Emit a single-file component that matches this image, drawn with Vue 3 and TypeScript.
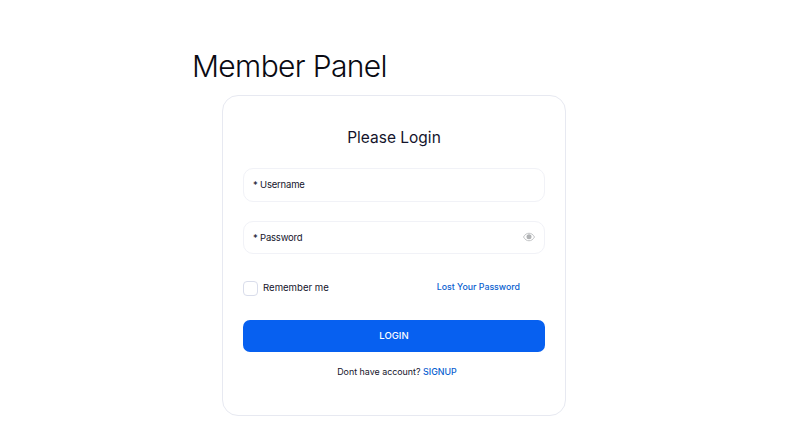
<script setup lang="ts">
const heading: string = 'Member Panel'
</script>

<template>
  <main class="page">
    <section class="panel">
      <h1 class="heading">{{ heading }}</h1>
      <form class="card" @submit.prevent>
        <h2 class="card-title">Please Login</h2>
        <div class="field field-user"><span>* Username</span></div>
        <div class="field field-pass">
          <span>* Password</span>
          <svg class="eye" viewBox="0 0 24 24" width="12" height="12" aria-hidden="true">
            <path d="M1 12C4 6.500 8 4.500 12 4.500S20 6.500 23 12c-3 5.500-7 7.500-11 7.500S4 17.500 1 12Z" fill="none" stroke="#c2c4c6" stroke-width="2" />
            <circle cx="12" cy="11.500" r="5" fill="#b0b2b4" />
          </svg>
        </div>
        <div class="options">
          <label class="remember"><span class="box"></span><span class="remember-text">Remember me</span></label>
          <a class="lost" href="#">Lost Your Password</a>
        </div>
        <button class="login" type="submit">LOGIN</button>
        <p class="signup">Dont have account? <a href="#">SIGNUP</a></p>
      </form>
    </section>
  </main>
</template>

<style>
html, body { margin: 0; background: #fff; }
</style>

<style scoped>
.page {
  width: 812px;
  height: 439px;
  overflow: hidden;
  background: #fff;
  font-family: "Inter", "Liberation Sans", sans-serif;
  color: #14142b;
  box-sizing: border-box;
  padding: 46px 0 0 192px;
}
.panel { display: flex; flex-direction: column; align-items: flex-start; }
.heading {
  margin: 0 0 9px;
  height: 40px;
  line-height: 40px;
  font-size: 30px;
  font-weight: 350;
  letter-spacing: -0.65px;
  color: #0a0a12;
}
.card {
  margin-left: 30px;
  width: 344px;
  height: 321px;
  box-sizing: border-box;
  border: 1px solid #e7e9f1;
  border-radius: 16px;
  padding: 32px 20px 0;
  display: flex;
  flex-direction: column;
}
.card-title {
  margin: 0;
  height: 20px;
  line-height: 20px;
  text-align: center;
  font-size: 15.500px;
  font-weight: 400;
}
.field {
  box-sizing: border-box;
  border: 1px solid #f1f2f7;
  border-radius: 10px;
  padding: 0 9px;
  display: flex;
  align-items: center;
  justify-content: space-between;
  font-size: 9.500px;
  letter-spacing: -0.2px;
}
.field-user { margin-top: 20px; height: 34px; padding-bottom: 1px; }
.field-pass { margin-top: 19px; height: 33px; padding-bottom: 1px; }
.eye { margin-right: 0; }
.options {
  margin-top: 27px;
  height: 15px;
  display: flex;
  align-items: center;
  justify-content: space-between;
  padding-right: 25px;
}
.remember {
  display: flex;
  align-items: center;
  gap: 5px;
  font-size: 9.600px;
}
.remember-text { margin-top: -2px; }
.box {
  width: 15px;
  height: 15px;
  box-sizing: border-box;
  border: 1px solid #d9ddeb;
  border-radius: 4px;
}
.lost {
  margin-top: -4px;
  font-size: 8.800px;
  font-weight: 500;
  color: #0a5fd0;
  text-decoration: none;
}
.login {
  margin-top: 24px;
  height: 32px;
  padding-bottom: 2px;
  border: 0;
  border-radius: 7px;
  background: #0760f0;
  color: #fff;
  font-family: inherit;
  font-size: 9.500px;
  font-weight: 500;
}
.signup {
  margin: 13px 0 0;
  padding-left: 6px;
  height: 14px;
  line-height: 14px;
  text-align: center;
  font-size: 8.900px;
}
.signup a { color: #0a5fd0; text-decoration: none; font-weight: 500; }
</style>
